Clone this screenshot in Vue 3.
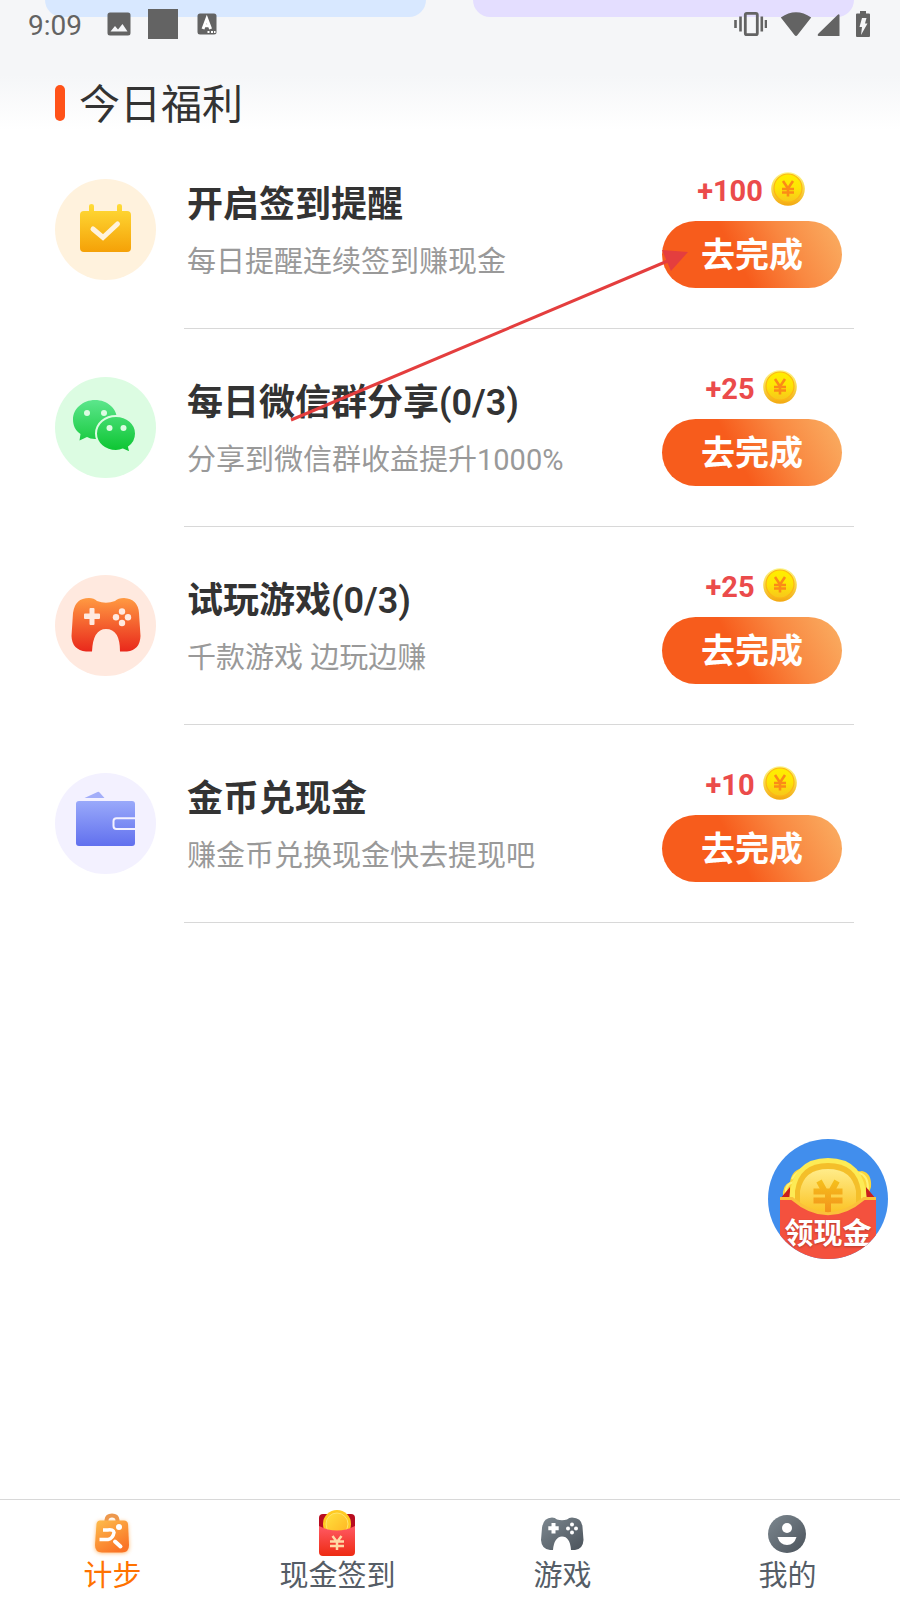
<script setup>
const tasks = [
  { icon: 'calendar', tint: 'amber', title: '开启签到提醒', note: '每日提醒连续签到赚现金', reward: '+100' },
  { icon: 'chat', tint: 'green', title: '每日微信群分享(0/3)', note: '分享到微信群收益提升1000%', reward: '+25' },
  { icon: 'gamepad', tint: 'red', title: '试玩游戏(0/3)', note: '千款游戏 边玩边赚', reward: '+25' },
  { icon: 'wallet', tint: 'violet', title: '金币兑现金', note: '赚金币兑换现金快去提现吧', reward: '+10' },
]

const tabs = [
  { icon: 'steps', label: '计步', active: true },
  { icon: 'packet', label: '现金签到' },
  { icon: 'pad', label: '游戏' },
  { icon: 'person', label: '我的' },
]
</script>

<template>
  <div class="page">
    <header class="top">
      <div class="cards">
        <div class="card blue"></div>
        <div class="card purple"></div>
      </div>
      <div class="status">
        <span class="time">9:09</span>
        <svg class="s-image" width="24" height="24" viewBox="0 0 24 24">
          <path fill-rule="evenodd" d="M3 0.500H21A2.500 2.500 0 0 1 23.500 3V21A2.500 2.500 0 0 1 21 23.500H3A2.500 2.500 0 0 1 .5 21V3A2.500 2.500 0 0 1 3 .5ZM3.500 19.500H20.500L15.500 12L11 17.500L8 14Z" />
        </svg>
        <span class="s-square"></span>
        <svg class="s-letter" width="20" height="22" viewBox="0 0 20 22">
          <rect x="0.500" y="0.500" width="19" height="21" rx="2.500" />
          <path d="M6 16L9.800 6L13.600 16M7.500 12.800H12" fill="none" stroke="#fff" stroke-width="3" />
          <path d="M10.500 19h2M14 19h2M17 19h1.500" stroke="#fff" stroke-width="2" />
        </svg>
        <svg class="s-right" width="34" height="26" viewBox="0 0 34 26">
          <rect x="12.300" y="2.300" width="12" height="21.400" rx="1.500" fill="none" stroke="#636363" stroke-width="2.800" />
          <path d="M2.500 9v8M7.500 5.500v15M28.800 5.500v15M33 9v8" fill="none" stroke="#636363" stroke-width="2.600" />
        </svg>
        <svg class="s-wifi" width="32" height="26" viewBox="0 0 32 26">
          <path d="M.8 6.500Q16-4 31.200 6.500L17.500 24Q16 26 14.500 24Z" />
        </svg>
        <svg class="s-signal" width="23" height="26" viewBox="0 0 23 26">
          <path d="M22.500 4V25H1.500Q0 24.500 1 23L20.500 4Q22 2.500 22.500 4Z" />
        </svg>
        <svg class="s-battery" width="14" height="26" viewBox="0 0 14 26">
          <path d="M4 0H10V2.500H13Q14 2.500 14 3.500V25Q14 26 13 26H1Q0 26 0 25V3.500Q0 2.500 1 2.500H4Z" />
          <path d="M6 7H10.500L9 12.500H11.500L5 24L6 16H3.500Z" fill="#f5f6f8" />
        </svg>
      </div>
    </header>

    <h1 class="heading"><span class="mark"></span><span class="heading-text">今日福利</span></h1>

    <main class="list">
      <section v-for="t in tasks" :key="t.title" class="task">
        <div class="badge" :class="t.tint">
          <svg width="101" height="101" viewBox="0 0 101 101">
            <defs>
              <linearGradient id="gAmber" x1="0" y1="25" x2="0" y2="73" gradientUnits="userSpaceOnUse"><stop stop-color="#ffdc38" /><stop offset="1" stop-color="#f5a107" /></linearGradient>
              <linearGradient id="gGreen" x1="0" y1="23" x2="0" y2="74" gradientUnits="userSpaceOnUse"><stop stop-color="#5ce68c" /><stop offset="1" stop-color="#0cc531" /></linearGradient>
              <linearGradient id="gRed" x1="0" y1="23" x2="0" y2="77" gradientUnits="userSpaceOnUse"><stop stop-color="#ff9a42" /><stop offset="1" stop-color="#e9271b" /></linearGradient>
              <linearGradient id="gViolet" x1="0" y1="25" x2="0" y2="73" gradientUnits="userSpaceOnUse"><stop stop-color="#9dadfb" /><stop offset="1" stop-color="#6170ee" /></linearGradient>
            </defs>
            <g v-if="t.icon === 'calendar'">
              <path fill="url(#gAmber)" d="M34 32V27Q34 25 36.500 25Q39 25 39 27V32H62V27Q62 25 64.500 25Q67 25 67 27V32H72Q76 32 76 36V69Q76 73 72 73H29Q25 73 25 69V36Q25 32 29 32Z" />
              <path d="M38 50L48 58.500L62.500 45" fill="none" stroke="#fff2dd" stroke-width="5" stroke-linecap="round" />
            </g>
            <g v-else-if="t.icon === 'chat'">
              <path fill="url(#gGreen)" d="M40 23C52.500 23 62 31.500 62 42.500C62 54 52 62 40 62Q35 62 32 60L24.500 63.500L25.500 57C20 53.500 18 48 18 42.500C18 31.500 28 23 40 23Z" />
              <path fill="url(#gGreen)" stroke="#dcfce2" stroke-width="2" d="M61 39C72 39 81 46.500 81 56.500Q81 65 74 70L75.500 76L68 72.500Q65 74 61 74C50 74 41 66.500 41 56.500C41 46.500 50 39 61 39Z" />
              <g fill="#dcfce2"><circle cx="32" cy="36" r="3" /><circle cx="49" cy="36" r="3" /><circle cx="54.500" cy="51" r="3" /><circle cx="68.500" cy="51" r="3" /></g>
            </g>
            <g v-else-if="t.icon === 'gamepad'">
              <path fill="url(#gRed)" d="M37 76.500H31Q17 75 16.500 61L18 38Q20 23 34 23Q39 23 42 26Q51 29.500 60 26Q63 23 69 23Q83 24 84 38L85.500 61Q85 75 72 76.500H65Q65 54 51 54Q38 54 37 76.500Z" />
              <g fill="#ffe9df"><path d="M35.500 33h3q1 0 1 1v4.500H44q1 0 1 1v3.500q0 1-1 1H39.500V49q0 1-1 1h-3q-1 0-1-1V44H30q-1 0-1-1V39.500q0-1 1-1H34.500V34q0-1 1-1Z" /><circle cx="67" cy="36.500" r="3.200" /><circle cx="67" cy="48" r="3.200" /><circle cx="61" cy="42.300" r="3.200" /><circle cx="73" cy="42.300" r="3.200" /></g>
            </g>
            <g v-else>
              <path fill="#a3aef9" d="M29.500 25L42 19.200Q43.500 18 45 20L49.500 25Z" />
              <rect x="21" y="28" width="59" height="45" rx="3" fill="url(#gViolet)" />
              <path d="M80 45.200H61.500Q58.500 45.200 58.500 48V53Q58.500 56 61.500 56H80" fill="none" stroke="#f3f1ff" stroke-width="2" />
            </g>
          </svg>
        </div>
        <div class="body">
          <div class="words">
            <h2>{{ t.title }}</h2>
            <p>{{ t.note }}</p>
          </div>
          <div class="action">
            <div class="reward">
              <span>{{ t.reward }}</span>
              <svg width="34" height="36" viewBox="0 0 34 36">
                <defs>
                  <linearGradient id="gRim" x1="0" y1="0" x2="0" y2="1"><stop stop-color="#fbf58a" /><stop offset=".5" stop-color="#f8d84a" /><stop offset="1" stop-color="#f3a80f" /></linearGradient>
                  <linearGradient id="gCoin" x1="0" y1="0" x2="0" y2="1"><stop stop-color="#ffee00" /><stop offset=".5" stop-color="#fde505" /><stop offset="1" stop-color="#f7c61d" /></linearGradient>
                </defs>
                <circle cx="17" cy="18" r="16.800" fill="url(#gRim)" />
                <circle cx="17" cy="17" r="14" fill="url(#gCoin)" stroke="#fdb614" stroke-width="1.200" />
                <path d="M12 10L17 17.500L22 10M17 17V25.500M11 18H23M11 21.500H23" fill="none" stroke="#fb8b17" stroke-width="2.600" />
              </svg>
            </div>
            <button type="button" class="go">去完成</button>
          </div>
        </div>
      </section>
      <svg class="arrow" width="400" height="172" viewBox="0 0 400 172" aria-hidden="true">
        <path d="M1 170L380 10" fill="none" stroke="#e43e3e" stroke-width="3" />
        <path d="M398 2L372 0L381 21Z" fill="#e43e3e" />
      </svg>
    </main>

    <button type="button" class="float" aria-label="领现金">
      <svg width="120" height="120" viewBox="0 0 120 120">
        <defs>
          <clipPath id="disc"><circle cx="60" cy="60" r="60" /></clipPath>
          <linearGradient id="gFace" x1="0" y1="0" x2="0" y2="1"><stop stop-color="#ffec8a" /><stop offset="1" stop-color="#fbc222" /></linearGradient>
          <linearGradient id="gYen" x1="0" y1="40" x2="0" y2="73" gradientUnits="userSpaceOnUse"><stop stop-color="#f5c11c" /><stop offset="1" stop-color="#f3921b" /></linearGradient>
        </defs>
        <g clip-path="url(#disc)">
          <rect width="120" height="120" fill="#418eed" />
          <path d="M15 58Q14 46 22 43Q24 30 36 29H84Q88 33 94 32Q104 34 103 48L99 60Z" fill="#fbd63b" />
          <path d="M18 54Q17 45 26 43M24 40Q29 31 35 32M91 34Q100 36 100 50" fill="none" stroke="#fff173" stroke-width="2" />
          <path d="M12 60L22 48V60ZM108 60L98 48V60Z" fill="#c91e1d" />
          <path d="M21 62Q23 19 60 19Q97 19 99 62Q60 92 21 62Z" fill="#fdeb55" />
          <path d="M27 64V52Q31 24 60 24Q89 24 93 52V64Q60 88 27 64Z" fill="#f4bf2a" />
          <path d="M32 66V52Q36 30 60 30Q84 30 88 52V66Q60 84 32 66Z" fill="url(#gFace)" />
          <path d="M51 42L56 51M69 42L64 51M45.500 52.500H74.500M45.500 61.500H74.500M60 52V74" fill="none" stroke="url(#gYen)" stroke-width="6" />
          <path d="M12 60H24Q60 90 96 60H108V122H12Z" fill="#f4513e" />
          <path d="M12 59.500H24Q60 90 96 59.500H108" fill="none" stroke="#fbc03a" stroke-width="3" />
          <text x="60" y="106" text-anchor="middle" class="float-shadow" aria-hidden="true">领现金</text>
          <text x="60" y="105" text-anchor="middle" class="float-text">领现金</text>
        </g>
      </svg>
    </button>

    <nav class="tabs">
      <a v-for="tab in tabs" :key="tab.label" href="#" :class="{ active: tab.active }">
        <svg width="50" height="50" viewBox="1 -1 50 50">
          <defs>
            <linearGradient id="gBag" x1="0" y1="0" x2=".6" y2="1"><stop stop-color="#fdbd4c" /><stop offset="1" stop-color="#fa7426" /></linearGradient>
            <linearGradient id="gPacket" x1="0" y1="0" x2="0" y2="1"><stop stop-color="#ff5a64" /><stop offset="1" stop-color="#ee2a12" /></linearGradient>
            <linearGradient id="gGold" x1="0" y1="0" x2="1" y2="1"><stop stop-color="#ffe13e" /><stop offset="1" stop-color="#ffb321" /></linearGradient>
            <linearGradient id="gSlate" x1="0" y1="0" x2="1" y2="1"><stop stop-color="#7d8890" /><stop offset="1" stop-color="#4b535b" /></linearGradient>
          </defs>
          <g v-if="tab.icon === 'steps'">
            <path class="bag-glow" d="M13 12.500H37Q40 12.500 40.400 16L42 37Q42 44 36 44H14Q8 44 8 37L10 16Q10 12.500 13 12.500Z" fill="#ffb466" />
            <path d="M19.500 15V11Q20 6.500 25 6.500T30.500 11V15" fill="none" stroke="#ed984d" stroke-width="4" />
            <path d="M13 11.500H37Q40.500 11.500 41 15L42 36Q42 43.500 35 43.500H15Q8 43.500 8 36L9.500 15Q10 11.500 13 11.500Z" fill="url(#gBag)" />
            <path d="M16 21H20.500Q26.500 20 27 23.500Q26 29.500 21 30.500H12.500" fill="none" stroke="#fff" stroke-width="3.500" />
            <path d="M28 32.500L33.500 37.500" stroke="#fff" stroke-width="4" stroke-linecap="round" />
            <circle cx="32" cy="18" r="3" fill="#fff" />
          </g>
          <g v-else-if="tab.icon === 'packet'">
            <rect x="7" y="5" width="36" height="30" rx="4" fill="#b80c20" />
            <circle cx="25" cy="15" r="14" fill="#ffca22" />
            <circle cx="25" cy="15" r="11" fill="url(#gGold)" stroke="#ffe36a" />
            <path d="M7 17Q25 26 43 17V43Q43 47 39 47H11Q7 47 7 43Z" fill="url(#gPacket)" />
            <path d="M20.500 27L25 33L29.500 27M18 32.500H32M18 37H32M25 32V41" fill="none" stroke="#ffd9a4" stroke-width="2.500" />
          </g>
          <g v-else-if="tab.icon === 'pad'">
            <path fill="url(#gSlate)" d="M16 41H13Q4.500 40 4 31L5 19Q6 9 15 8.500Q18 8.500 20 10.500Q25 12 30 10.500Q32 8.500 35 8.500Q45 9 45.500 18L46.500 31Q46 40 38 41H34Q33 27.500 25 27.500Q17 28 16 41Z" />
            <g fill="#fff"><path d="M14.500 14h4v3.200h3.200v4H18.500v3.300h-4v-3.300h-3.200v-4h3.200Z" /><circle cx="35" cy="15.500" r="2" /><circle cx="35" cy="23.500" r="2" /><circle cx="31" cy="19.500" r="2" /><circle cx="39" cy="19.500" r="2" /></g>
          </g>
          <g v-else>
            <circle cx="25" cy="25" r="19" fill="url(#gSlate)" />
            <circle cx="25" cy="19" r="5" fill="#fff" />
            <path d="M15.500 28H34.500Q32 36 25 36T15.500 28Z" fill="#fff" />
          </g>
        </svg>
        <span>{{ tab.label }}</span>
      </a>
    </nav>
  </div>
</template>

<style>
body {
  margin: 0;
  background: #fff;
}
</style>

<style scoped>
.page {
  position: relative;
  display: flex;
  flex-direction: column;
  min-height: 100vh;
  background: linear-gradient(#f5f6f8 0, #f5f6f8 75px, #fff 130px);
  color: #333;
  font-family: Roboto, "Noto Sans CJK SC", sans-serif;
}
.top {
  position: relative;
  height: 75px;
}
.cards {
  display: grid;
  grid-template-columns: 1fr 1fr;
  gap: 47px;
  padding: 0 46px 0 45px;
}
.card {
  height: 17px;
  border-radius: 0 0 20px 20px;
}
.blue { background: #d8e8ff; }
.purple { background: #e4deff; }
.status {
  position: absolute;
  inset: 0 0 auto 0;
  display: flex;
  align-items: center;
  height: 48px;
  padding: 0 30px 0 28px;
  color: #636363;
  fill: #636363;
}
.time {
  width: 79px;
  padding-top: 3px;
  font-size: 28px;
  line-height: 45px;
}
.s-square {
  width: 30px;
  height: 30px;
  margin: 0 19px 0 17px;
  background: #636363;
}
.s-right { margin-left: auto; }
.s-wifi { margin-left: 13px; }
.s-signal { margin-left: 5px; }
.s-battery { margin-left: 16px; }
.heading {
  display: flex;
  align-items: center;
  gap: 14px;
  height: 56px;
  margin: 0;
  padding-left: 55px;
  font-size: 41px;
  font-weight: 400;
}
.heading-text {
  padding-top: 4px;
  line-height: 52px;
}
.mark {
  width: 10px;
  height: 36px;
  border-radius: 5px;
  background: #ff5219;
}
.list {
  position: relative;
  flex: 1;
  padding: 0 46px 0 55px;
}
.task {
  display: flex;
  gap: 28px;
}
.badge {
  width: 101px;
  height: 101px;
  margin-top: 48px;
  border-radius: 50%;
}
.badge svg { display: block; }
.amber { background: #fff2dd; }
.green { background: #dcfce2; }
.red { background: #ffe9df; }
.violet { background: #f3f1ff; }
.body {
  flex: 1;
  display: flex;
  justify-content: space-between;
  box-sizing: border-box;
  height: 198px;
  padding: 40px 12px 0 3px;
  border-bottom: 1px solid #d8d8d8;
}
h2 {
  margin: 9px 0 0;
  font-size: 36px;
  line-height: 50px;
  font-weight: 600;
}
p {
  margin: 10px 0 0;
  color: #999;
  font-size: 29px;
  line-height: 44px;
}
.action { width: 180px; }
.reward {
  display: flex;
  justify-content: center;
  align-items: center;
  gap: 8px;
  height: 36px;
  margin-bottom: 14px;
  padding-right: 2px;
  color: #eb4b4b;
  font-size: 29px;
  font-weight: 700;
}
.reward span {
  padding-top: 4px;
  line-height: 32px;
}
.go {
  display: block;
  width: 100%;
  height: 67px;
  padding: 2px 0 0;
  border: 0;
  border-radius: 34px;
  background: linear-gradient(62deg, #f75c1c 42%, #f98841 68%, #fab064 100%);
  color: #fff;
  font: 600 34px/65px Roboto, "Noto Sans CJK SC", sans-serif;
}
.arrow {
  position: absolute;
  left: 290px;
  top: 119px;
  pointer-events: none;
}
.float {
  position: absolute;
  right: 12px;
  bottom: 341px;
  padding: 0;
  border: 0;
  border-radius: 50%;
  background: none;
}
.float svg { display: block; }
.float-text,
.float-shadow {
  fill: #fff;
  font: 700 29px "Noto Sans CJK SC", sans-serif;
}
.float-shadow {
  fill: #b43a2c;
  filter: blur(1px);
}
.tabs {
  display: grid;
  grid-template-columns: repeat(4, 1fr);
  border-top: 1px solid #d8d8d8;
  background: #fff;
}
.tabs a {
  display: flex;
  flex-direction: column;
  align-items: center;
  height: 92px;
  padding-top: 8px;
  color: #555d66;
  font-size: 29px;
  line-height: 36px;
  text-decoration: none;
}
.tabs .active { color: #ff7200; }
.tabs svg { flex: none; }
.bag-glow { filter: blur(2px); }
</style>
